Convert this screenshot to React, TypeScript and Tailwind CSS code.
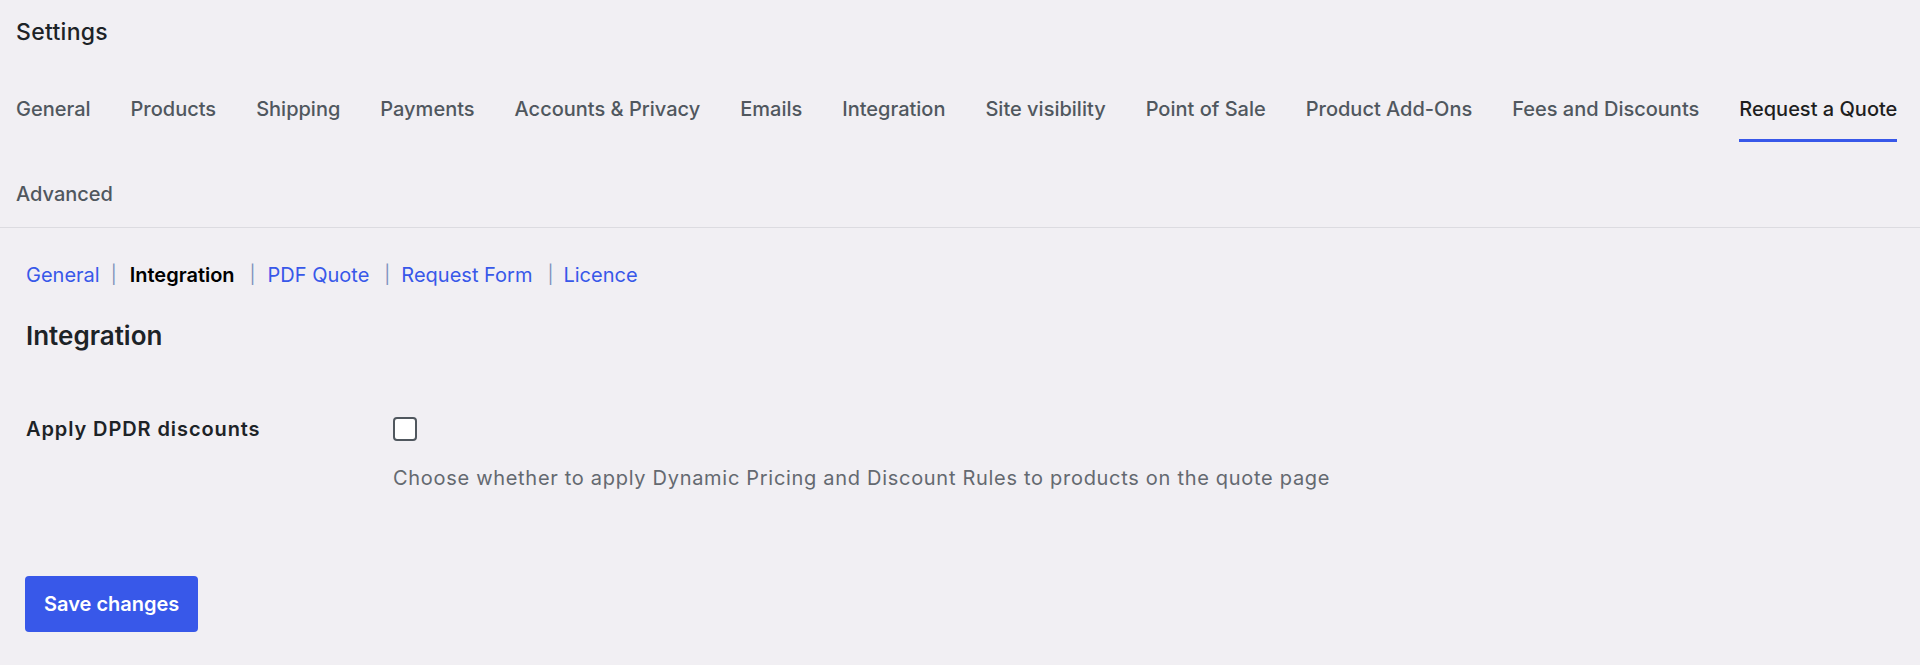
import React from "react";

type Tab = { label: string; active?: boolean };

const tabs: Tab[] = [
  { label: "General" },
  { label: "Products" },
  { label: "Shipping" },
  { label: "Payments" },
  { label: "Accounts & Privacy" },
  { label: "Emails" },
  { label: "Integration" },
  { label: "Site visibility" },
  { label: "Point of Sale" },
  { label: "Product Add-Ons" },
  { label: "Fees and Discounts" },
  { label: "Request a Quote", active: true },
  { label: "Advanced" },
];

type Section = { label: string; current?: boolean; sepClass?: string };

const sections: Section[] = [
  { label: "General", sepClass: "ml-[11px] mr-[13px]" },
  { label: "Integration", current: true, sepClass: "ml-[15px] mr-[12px]" },
  { label: "PDF Quote", sepClass: "ml-[15px] mr-[11px]" },
  { label: "Request Form", sepClass: "ml-[15px] mr-[10px]" },
  { label: "Licence" },
];

function SettingsTabs() {
  return (
    <nav className="mt-[35px] flex flex-wrap gap-x-[40px] gap-y-[25px] px-4">
      {tabs.map((t) => (
        <a
          key={t.label}
          href="#"
          className={
            t.active
              ? "border-b-[3px] border-[#3858e9] pt-3 pb-[15px] text-[20px] leading-[30px] font-medium whitespace-nowrap text-[#1e1e1e]"
              : "border-b-[3px] border-transparent pt-3 pb-[15px] text-[20px] leading-[30px] font-medium whitespace-nowrap text-[#50575e]"
          }
        >
          {t.label}
        </a>
      ))}
    </nav>
  );
}

function SectionLinks() {
  return (
    <ul className="mt-[32px] flex items-center text-[20px] leading-[30px]">
      {sections.map((s) => (
        <li key={s.label} className="flex items-center">
          {s.current ? (
            <span className="font-semibold text-[#000000]">{s.label}</span>
          ) : (
            <a href="#" className="text-[#3858e9]">
              {s.label}
            </a>
          )}
          {s.sepClass && <span className={"text-[18px] text-[#7f93bd] " + s.sepClass}>|</span>}
        </li>
      ))}
    </ul>
  );
}

export default function App() {
  return (
    <div className="min-h-screen bg-[#f1eff3] font-['Inter','Noto_Sans',sans-serif] antialiased">
      <header className="border-b border-[#dcdbe0]">
        <h1 className="px-4 pt-[17px] text-[23px] leading-[30px] font-medium tracking-[0.3px] text-[#1d2327]">
          Settings
        </h1>
        <SettingsTabs />
      </header>

      <main className="px-[26px]">
        <SectionLinks />

        <h2 className="mt-[29px] text-[26px] leading-[34px] font-semibold text-[#1d2327]">Integration</h2>

        <div className="mt-[61px] flex items-start">
          <label
            htmlFor="dpdr"
            className="w-[367px] shrink-0 text-[20px] leading-[30px] font-semibold tracking-[0.9px] text-[#1d2327]"
          >
            Apply DPDR discounts
          </label>
          <div className="flex flex-col">
            <input
              id="dpdr"
              type="checkbox"
              className="mt-[3px] h-[24px] w-[24px] appearance-none rounded-[4px] border-2 border-[#50575e] bg-white"
            />
            <p className="mt-[22px] text-[20px] leading-[30px] tracking-[0.7px] text-[#646970]">
              Choose whether to apply Dynamic Pricing and Discount Rules to products on the quote page
            </p>
          </div>
        </div>

        <button
          type="button"
          className="mt-[83px] -ml-px h-[56px] rounded-[4px] bg-[#3858e9] px-[19px] text-[20px] leading-[30px] font-semibold text-white"
        >
          Save changes
        </button>
      </main>
    </div>
  );
}
